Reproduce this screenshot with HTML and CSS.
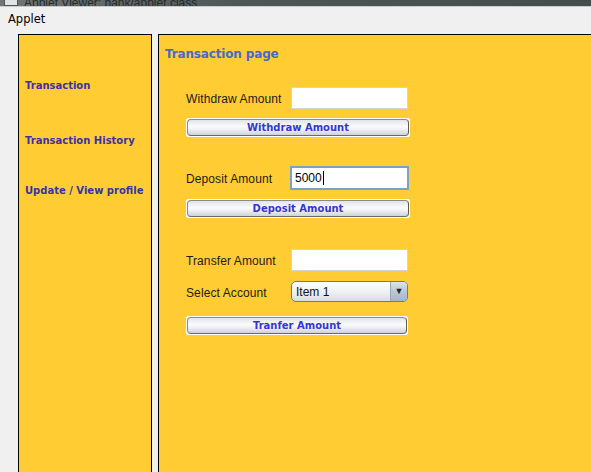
FILE: index.html
```html
<!DOCTYPE html>
<html>
<head>
<meta charset="utf-8">
<link rel="stylesheet" href="styles.css">
</head>
<body>
<div class="titlebar"><span class="ticon"></span><span class="ttext">Applet Viewer: bank/applet.class</span></div>
<div class="menubar"><span class="menu">Applet</span></div>
<div class="main">
  <div class="nav">
    <div class="nav-item n1">Transaction</div>
    <div class="nav-item n2">Transaction History</div>
    <div class="nav-item n3">Update / View profile</div>
  </div>
  <div class="gap"></div>
  <div class="content">
    <div class="title">Transaction page</div>
    <div class="form">
      <div class="row r1"><span class="label">Withdraw Amount</span><div class="field"></div></div>
      <div class="btn b1"><div class="btn-in">Withdraw Amount</div></div>
      <div class="row r2"><span class="label">Deposit Amount</span><div class="field focus">5000<span class="caret"></span></div></div>
      <div class="btn b2"><div class="btn-in">Deposit Amount</div></div>
      <div class="row r3"><span class="label">Transfer Amount</span><div class="field"></div></div>
      <div class="row r4"><span class="label">Select Account</span><div class="combo"><span class="combo-text">Item 1</span><span class="combo-arrow">&#9660;</span></div></div>
      <div class="btn b3"><div class="btn-in">Tranfer Amount</div></div>
    </div>
  </div>
</div>
</body>
</html>
```
FILE: styles.css
```css
html, body {
  margin: 0;
  padding: 0;
  height: 100%;
  overflow: hidden;
  background: #f0f0f0;
  font-family: "Liberation Sans", Arial, sans-serif;
}
.titlebar {
  height: 6px;
  background: linear-gradient(90deg, #6f7777 0%, #4e5656 40%, #444c4c 100%);
  border-bottom: 1px solid #c8cccc;
  overflow: hidden;
  display: flex;
  align-items: flex-start;
}
.ticon {
  display: block;
  width: 14px;
  height: 6px;
  margin-left: 4px;
  background: #dfe3e6;
  border: 1px solid #555;
  border-top: none;
  box-sizing: border-box;
}
.ttext {
  display: block;
  margin-left: 6px;
  font-size: 12px;
  line-height: 6px;
  height: 6px;
  color: #262b2b;
  white-space: nowrap;
  overflow: hidden;
}
.menubar {
  height: 27px;
  box-sizing: border-box;
  padding-left: 8px;
  padding-top: 5px;
  font-family: "DejaVu Sans", sans-serif;
  font-size: 11.5px;
  color: #000;
}
.main {
  display: flex;
  padding-left: 18px;
  height: 440px;
}
.nav {
  width: 134px;
  box-sizing: border-box;
  background: #ffcc33;
  border: 1px solid #000;
  border-bottom: none;
  padding-left: 6px;
  padding-top: 44px;
  display: flex;
  flex-direction: column;
}
.nav-item {
  font-family: "DejaVu Sans", sans-serif;
  font-weight: bold;
  font-size: 10px;
  line-height: 14px;
  color: #3a32a8;
  white-space: nowrap;
}
.n2 { margin-top: 41px; }
.n3 { margin-top: 36px; }
.gap {
  width: 6px;
}
.content {
  flex: 1;
  background: #ffcc33;
  border-left: 1px solid #000;
  border-top: 1px solid #000;
  padding-left: 6px;
  padding-top: 11px;
}
.title {
  font-family: "DejaVu Sans", sans-serif;
  font-weight: bold;
  font-size: 12px;
  line-height: 16px;
  color: #4a68c8;
  letter-spacing: -0.15px;
}
.form {
  margin-left: 21px;
  margin-top: 25px;
  display: flex;
  flex-direction: column;
  width: 224px;
}
.row {
  display: flex;
  align-items: center;
  height: 22px;
}
.label {
  width: 105px;
  font-size: 12px;
  color: #1b1b1b;
  white-space: nowrap;
  letter-spacing: 0.1px;
  padding-top: 2px;
}
.field {
  width: 117px;
  height: 22px;
  box-sizing: border-box;
  background: #fff;
  border: 1px solid #d4d4d0;
  font-size: 12px;
  line-height: 20px;
  padding-left: 4px;
  display: flex;
  align-items: center;
}
.field.focus {
  border: 2px solid #7ea0c4;
  width: 119px;
  height: 24px;
  margin-left: -1px;
  padding-left: 3px;
  color: #000;
}
.caret {
  display: inline-block;
  width: 1px;
  height: 14px;
  background: #000;
  margin-left: 1px;
}
.btn {
  height: 19px;
  box-sizing: border-box;
  border: 1px solid #fff;
  border-radius: 2px;
  background: #fff;
}
.btn-in {
  height: 17px;
  box-sizing: border-box;
  border: 1px solid #8a8a8a;
  border-right-color: #5a5a5a;
  border-bottom-color: #6a6a6a;
  border-radius: 4px;
  background: linear-gradient(180deg, #e2e4e8 0%, #fbfbfc 45%, #f2f3f5 60%, #cfd2d8 100%);
  text-align: center;
  font-family: "DejaVu Sans", sans-serif;
  font-weight: bold;
  font-size: 10px;
  line-height: 15px;
  color: #3535d0;
}
.b1 { margin-top: 9px; width: 224px; }
.r2 { margin-top: 29px; height: 24px; }
.b2 { margin-top: 9px; width: 224px; }
.r3 { margin-top: 31px; }
.r4 { margin-top: 10px; height: 21px; }
.b3 { margin-top: 14px; width: 222px; }
.combo {
  width: 117px;
  height: 21px;
  box-sizing: border-box;
  border: 1px solid #6f7c88;
  border-radius: 5px;
  background: linear-gradient(180deg, #ffffff 0%, #f0f1f3 50%, #d9dde2 100%);
  display: flex;
  align-items: center;
  overflow: hidden;
}
.combo-text {
  flex: 1;
  font-size: 12px;
  padding-left: 4px;
  padding-top: 1px;
  color: #111;
}
.combo-arrow {
  width: 17px;
  height: 19px;
  box-sizing: border-box;
  border-left: 1px solid #9aa6b2;
  background: linear-gradient(180deg, #dbe4ec 0%, #b9c8d6 50%, #a5b6c6 100%);
  font-size: 9px;
  line-height: 19px;
  text-align: center;
  color: #1d2630;
}
```
